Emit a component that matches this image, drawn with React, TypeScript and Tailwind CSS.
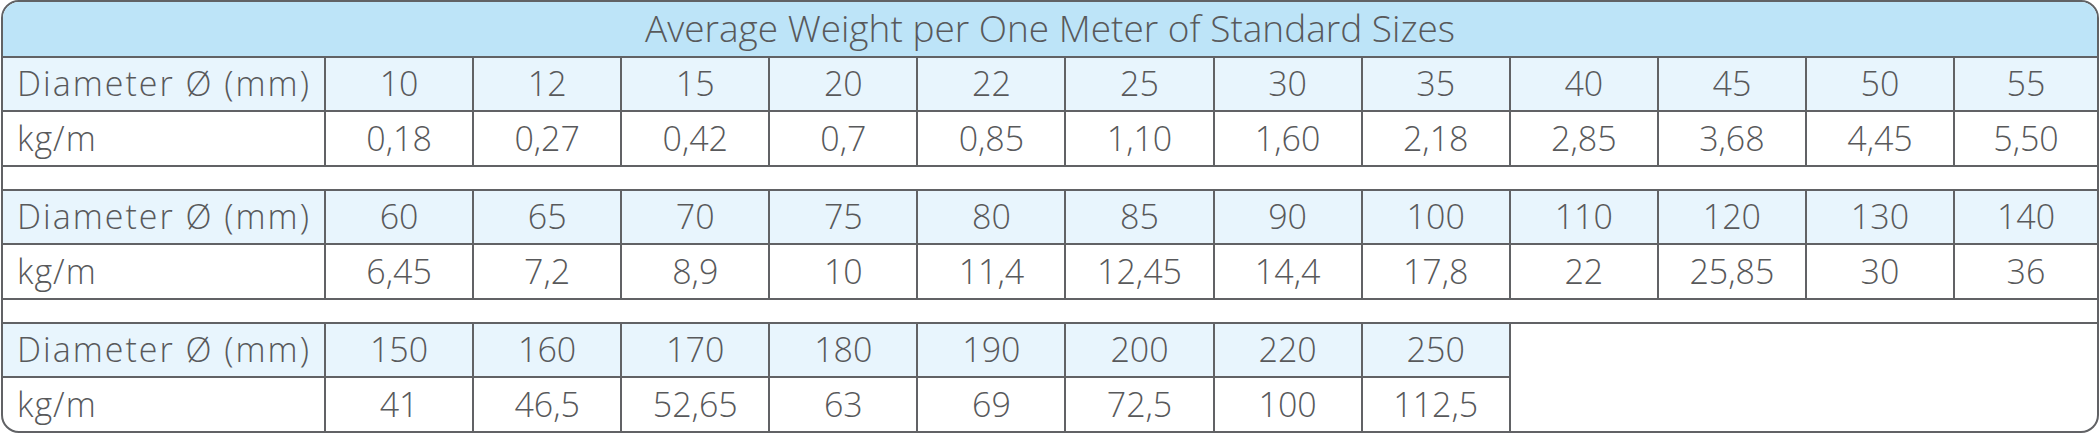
const sections: { sizes: string[]; weights: string[] }[] = [
  {
    sizes: ['10', '12', '15', '20', '22', '25', '30', '35', '40', '45', '50', '55'],
    weights: ['0,18', '0,27', '0,42', '0,7', '0,85', '1,10', '1,60', '2,18', '2,85', '3,68', '4,45', '5,50'],
  },
  {
    sizes: ['60', '65', '70', '75', '80', '85', '90', '100', '110', '120', '130', '140'],
    weights: ['6,45', '7,2', '8,9', '10', '11,4', '12,45', '14,4', '17,8', '22', '25,85', '30', '36'],
  },
  {
    sizes: ['150', '160', '170', '180', '190', '200', '220', '250'],
    weights: ['41', '46,5', '52,65', '63', '69', '72,5', '100', '112,5'],
  },
];

const COLS = 12;

export default function App() {
  return (
    <div className="w-[2100px] h-[433px] bg-white pl-px pr-px font-['Open_Sans',sans-serif] font-light text-[#58595b]">
      <div className="h-[433px] rounded-[18px] border-2 border-[#616265] overflow-hidden">
        <div className="h-[56px] bg-[#bde4f8] border-b-2 border-[#616265] flex items-center justify-center text-[37px] leading-none pb-[3px]">
          Average Weight per One Meter of Standard Sizes
        </div>
        <table className="w-full table-fixed border-separate border-spacing-0">
          <colgroup>
            <col className="w-[323px]" />
            {Array.from({ length: COLS - 1 }).map((_, i) => (
              <col key={i} className="w-[148.1px]" />
            ))}
            <col />
          </colgroup>
          <tbody>
            {sections.map((s, si) => {
              const last = si === sections.length - 1;
              const fill = COLS - s.sizes.length;
              return [
                <tr key={`d${si}`}>
                  <td className="h-[54px] p-0 bg-[#e8f5fd] border-r-2 border-b-2 border-[#616265] pl-[14px] pb-[2px] text-[34px] tracking-[2px] leading-none whitespace-nowrap">
                    Diameter Ø (mm)
                  </td>
                  {s.sizes.map((v, i) => (
                    <td
                      key={v}
                      className={`h-[54px] p-0 pb-[2px] bg-[#e8f5fd] border-b-2 border-[#616265] text-center text-[34px] leading-none ${
                        i < COLS - 1 ? 'border-r-2' : ''
                      }`}
                    >
                      {v}
                    </td>
                  ))}
                  {fill > 0 && <td colSpan={fill} className="p-0" />}
                </tr>,
                <tr key={`w${si}`}>
                  <td
                    className={`p-0 pl-[14px] pb-[2px] border-r-2 border-[#616265] text-[34px] tracking-[1px] leading-none ${
                      last ? 'h-[53px]' : 'h-[55px] border-b-2'
                    }`}
                  >
                    kg/m
                  </td>
                  {s.weights.map((v, i) => (
                    <td
                      key={i}
                      className={`p-0 pb-[2px] border-[#616265] text-center text-[34px] leading-none ${
                        i < COLS - 1 ? 'border-r-2' : ''
                      } ${last ? 'h-[53px]' : 'h-[55px] border-b-2'}`}
                    >
                      {v}
                    </td>
                  ))}
                  {fill > 0 && <td colSpan={fill} className="p-0" />}
                </tr>,
                !last && (
                  <tr key={`s${si}`}>
                    <td colSpan={COLS + 1} className="h-[24px] p-0 border-b-2 border-[#616265]" />
                  </tr>
                ),
              ];
            })}
          </tbody>
        </table>
      </div>
    </div>
  );
}
